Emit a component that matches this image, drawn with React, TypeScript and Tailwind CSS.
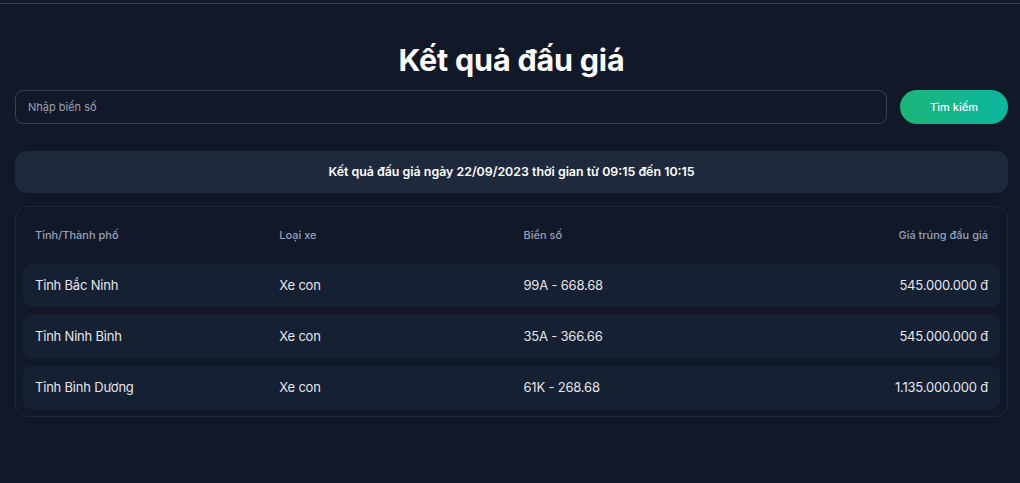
const rows = [
  { province: "Tỉnh Bắc Ninh", type: "Xe con", plate: "99A - 668.68", price: "545.000.000 đ" },
  { province: "Tỉnh Ninh Bình", type: "Xe con", plate: "35A - 366.66", price: "545.000.000 đ" },
  { province: "Tỉnh Bình Dương", type: "Xe con", plate: "61K - 268.68", price: "1.135.000.000 đ" },
];

export default function App() {
  return (
    <div className="min-h-[483px] bg-[#111827] font-['Inter',sans-serif] text-white">
      <div className="h-[3px]" />
      <div className="h-px bg-[#334155]" />
      <main className="pl-[15px] pr-[12px] pt-[38px]">
        <h1 className="text-center text-[30.5px] font-bold leading-9 tracking-[-0.2px] text-white">
          Kết quả đấu giá
        </h1>

        <div className="mt-3 flex items-center gap-[13px]">
          <input
            className="h-[34px] flex-1 rounded-lg border border-[#374151] bg-[#111827] px-3 text-[11px] text-white placeholder:text-[#9ca3af] outline-none"
            placeholder="Nhập biển số"
          />
          <button className="h-[34px] w-[108px] rounded-full bg-gradient-to-r from-[#1bb578] to-[#0bb79f] text-[11px] font-medium text-white">
            Tìm kiếm
          </button>
        </div>

        <div className="mt-[27px] flex h-[42px] items-center justify-center rounded-xl bg-[#1e293b] text-[12.4px] font-semibold text-white">
          Kết quả đấu giá ngày 22/09/2023 thời gian từ 09:15 đến 10:15
        </div>

        <div className="mt-[13px] rounded-xl border border-[#1e293b] p-[7px]">
          <div className="grid h-[42px] grid-cols-4 items-center text-[11px] font-medium text-[#94a3b8]">
            <div className="px-3">Tỉnh/Thành phố</div>
            <div className="px-3">Loại xe</div>
            <div className="px-3">Biển số</div>
            <div className="px-3 text-right">Giá trúng đấu giá</div>
          </div>
          <div className="mt-2 flex flex-col gap-2">
            {rows.map((r) => (
              <div
                key={r.plate}
                className="grid h-[43px] grid-cols-4 items-center rounded-lg bg-[#162033] text-[13px] tracking-[-0.2px] text-[#e5e7eb]"
              >
                <div className="px-3">{r.province}</div>
                <div className="px-3">{r.type}</div>
                <div className="px-3">{r.plate}</div>
                <div className="px-3 text-right">{r.price}</div>
              </div>
            ))}
          </div>
        </div>
      </main>
    </div>
  );
}
